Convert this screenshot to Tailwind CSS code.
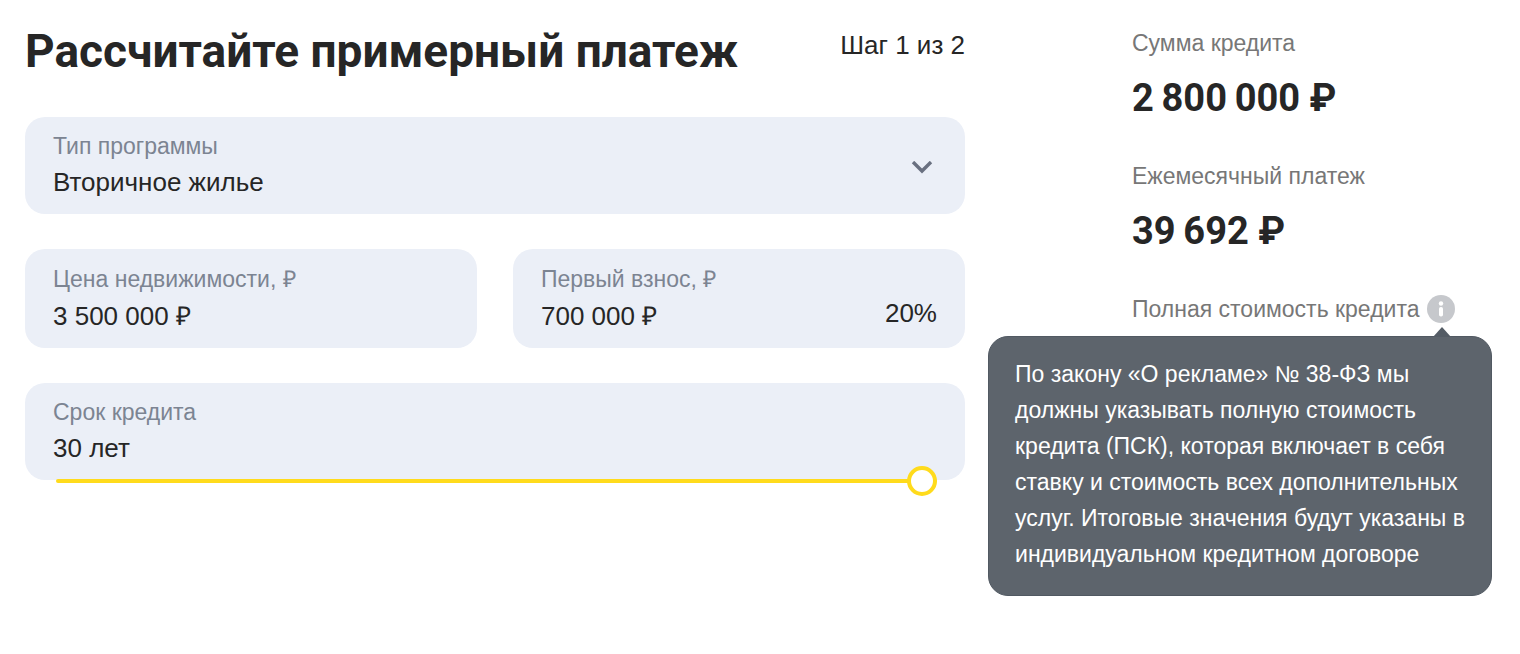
<!DOCTYPE html>
<html lang="ru">

<head>
    <meta charset="UTF-8">
    <meta name="viewport" content="width=device-width, initial-scale=1.0">
    <script src="https://cdn.jsdelivr.net/npm/@tailwindcss/browser@4"></script>
    <title>Рассчитайте примерный платеж</title>
</head>

<body class="bg-white text-[#262626] font-['Liberation_Sans',Arial,sans-serif]">
    <main class="grid min-h-screen grid-cols-[minmax(0,1fr)_360px] gap-[167px] pl-[25px] pr-7">

        <form class="pt-[23px]">
            <div class="flex items-start justify-between">
                <h1 class="font-['Roboto',sans-serif] text-[46px] leading-[56px] font-bold whitespace-nowrap">Рассчитайте примерный платеж</h1>
                <p class="mt-1.5 text-[26px] leading-8 whitespace-nowrap">Шаг 1 из 2</p>
            </div>

            <div class="mt-[38px] grid grid-cols-2 gap-x-9 gap-y-[35px]">
                <div class="relative col-span-2 rounded-[20px] bg-[#ebeff7] px-7 pt-[15px] pb-2.5">
                    <label for="program" class="block text-[23px] leading-7 text-[#7c8492]">Тип программы</label>
                    <select id="program" class="block h-11 w-full appearance-none bg-transparent text-[26px] outline-none">
                        <option>Вторичное жилье</option>
                        <option>Новостройка</option>
                    </select>
                    <svg class="pointer-events-none absolute top-11 right-8 h-3.5 w-[22px]" viewBox="0 0 22 14" fill="none" stroke="#697080" stroke-width="3.4">
                        <path d="M2 1 11 10 20 1" />
                    </svg>
                </div>

                <div class="rounded-[20px] bg-[#ebeff7] px-7 pt-4 pb-[11px]">
                    <label for="price" class="block text-[23px] leading-7 text-[#7c8492]">Цена недвижимости, ₽</label>
                    <input id="price" type="text" value="3 500 000 ₽" class="block h-11 w-full bg-transparent text-[26px] outline-none">
                </div>

                <div class="flex rounded-[20px] bg-[#ebeff7] px-7 pt-4 pb-[11px]">
                    <div class="min-w-0 flex-1">
                        <label for="deposit" class="block text-[23px] leading-7 text-[#7c8492]">Первый взнос, ₽</label>
                        <input id="deposit" type="text" value="700 000 ₽" class="block h-11 w-full bg-transparent text-[26px] outline-none">
                    </div>
                    <output for="deposit" class="mb-0.5 self-end text-[26px] leading-11">20%</output>
                </div>

                <div class="relative col-span-2 rounded-[20px] bg-[#ebeff7] px-7 pt-[15px] pb-2.5">
                    <label for="term" class="block text-[23px] leading-7 text-[#7c8492]">Срок кредита</label>
                    <input id="term" type="text" value="30 лет" class="block h-11 w-full bg-transparent text-[26px] outline-none">
                    <!-- слайдер лежит на нижней границе поля -->
                    <div class="absolute right-7 -bottom-4 left-[31px] flex">
                        <input type="range" min="1" max="30" value="30" aria-label="Срок кредита, лет"
                            class="h-[30px] w-full appearance-none bg-transparent outline-none [&::-webkit-slider-runnable-track]:h-1 [&::-webkit-slider-runnable-track]:rounded-xs [&::-webkit-slider-runnable-track]:bg-[#ffdb1c] [&::-webkit-slider-thumb]:-mt-[13px] [&::-webkit-slider-thumb]:size-[30px] [&::-webkit-slider-thumb]:appearance-none [&::-webkit-slider-thumb]:rounded-full [&::-webkit-slider-thumb]:border-4 [&::-webkit-slider-thumb]:border-solid [&::-webkit-slider-thumb]:border-[#ffdb1c] [&::-webkit-slider-thumb]:bg-white">
                    </div>
                </div>
            </div>
        </form>

        <dl class="flex flex-col gap-10 pt-[29px]">
            <div>
                <dt class="text-[23px] leading-7 text-[#777]">Сумма кредита</dt>
                <dd class="mt-[17px] font-['Roboto',sans-serif] text-[38px] leading-[48px] font-bold">2&#8201;800&#8201;000 ₽</dd>
            </div>
            <div>
                <dt class="text-[23px] leading-7 text-[#777]">Ежемесячный платеж</dt>
                <dd class="mt-[17px] font-['Roboto',sans-serif] text-[38px] leading-[48px] font-bold">39&#8201;692 ₽</dd>
            </div>
            <div class="relative">
                <dt class="flex items-center gap-2 text-[23px] leading-7 whitespace-nowrap text-[#777]">
                    Полная стоимость кредита
                    <button type="button" aria-label="Подробнее" aria-describedby="psk">
                        <svg class="block size-7" viewBox="0 0 28 28">
                            <circle cx="14" cy="14" r="14" fill="#c6c8cc" />
                            <circle cx="14" cy="8.5" r="2.2" fill="#fff" />
                            <rect x="12" y="12" width="4" height="9.5" rx="1.8" fill="#fff" />
                        </svg>
                    </button>
                </dt>
                <dd id="psk" role="tooltip" class="absolute top-[41px] right-0 rounded-[20px] border border-[#515962] bg-[#5d646c] px-[26px] pt-[19px] pb-[23px] text-[23px] leading-9 whitespace-nowrap text-white">
                    <svg class="absolute -top-2.5 right-10 h-2.5 w-[18px]" viewBox="0 0 18 10" fill="#545c65">
                        <path d="M0 10 9 0 18 10Z" />
                    </svg>
                    По закону «О рекламе» № 38-ФЗ мы<br>
                    должны указывать полную стоимость<br>
                    кредита (ПСК), которая включает в себя<br>
                    ставку и стоимость всех дополнительных<br>
                    услуг. Итоговые значения будут указаны в<br>
                    индивидуальном кредитном договоре
                </dd>
            </div>
        </dl>
    </main>
</body>

</html>
